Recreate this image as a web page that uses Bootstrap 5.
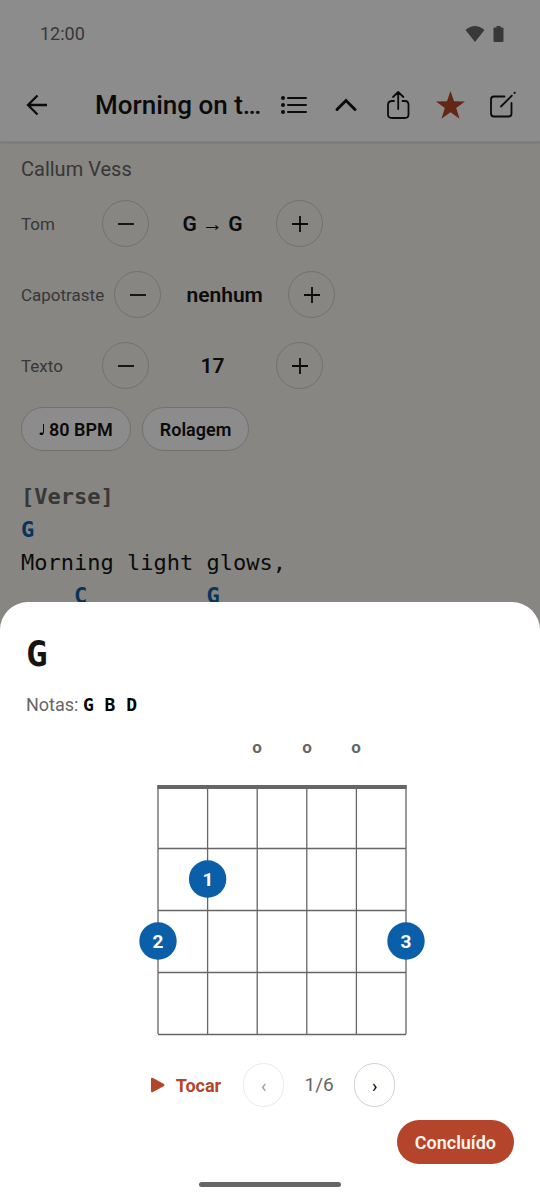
<!DOCTYPE html>
<html lang="pt">
<head>
<meta charset="utf-8">
<meta name="viewport" content="width=device-width, initial-scale=1">
<title>Morning on t…</title>
<link rel="stylesheet" href="https://cdn.jsdelivr.net/npm/bootstrap@5.3.0/dist/css/bootstrap.min.css">
<style>
  :root { --ink: #141414; --muted: #666; --accent: #b5452a; --chord: #0b5fa8; --edge: #dad8d2; }
  body { font-family: Roboto, "Liberation Sans", sans-serif; font-size: 18px; line-height: 24px; color: var(--ink); background: #f6f4ed; overflow: hidden; }
  .mono { font-family: "DejaVu Sans Mono", "Liberation Mono", monospace; }
  .soft { color: var(--muted); }
  .status { height: 68px; padding: 0 36px 0 40px; }
  .topbar { height: 73px; padding: 0 16px 0 15px; }
  .head { border-bottom: 1px solid #e7e7e5; box-shadow: 0 1px 2px #0002; }
  .tool { width: 44px; height: 44px; color: var(--ink); }
  .song-title { font-size: 26px; line-height: 32px; font-weight: 500; margin-left: 36px; }
  .song { padding: 15px 21px; }
  .artist { font-size: 20px; }
  .steppers { margin-top: 19px; gap: 24px; }
  .stepper { gap: 10px; }
  .stepper-label { min-width: 71px; font-size: 17px; }
  .stepper-value { width: 107px; font-size: 21px; font-weight: 600; text-align: center; }
  .round { width: 47px; height: 47px; border: 1px solid #cfcdc6; color: var(--ink); }
  .pills { margin-top: 18px; gap: 11px; }
  .pill { height: 44px; padding: 0 17px; font-size: 18px; font-weight: 600; border: 1px solid #cfcdc6; background: #fff; color: var(--ink); }
  .lyrics { margin: 29px 0 0; font-size: 22px; line-height: 33px; overflow: visible; }
  .chord { color: var(--chord); font-weight: 700; }
  .offcanvas-backdrop.show { opacity: .45; }
  .sheet.offcanvas { height: auto; max-height: none; border: 0; border-radius: 28px 28px 0 0; color: var(--ink); background: #fff; }
  .sheet-body { padding: 28px 26px 13px; }
  .sheet-title { font-size: 36px; line-height: 48px; font-weight: 700; }
  .notes { margin-top: 15px; }
  .fretboard { margin-top: 16px; }
  .pager { margin-top: 20px; }
  .play { color: var(--accent); font-size: 18px; font-weight: 700; gap: 11px; padding: 0 22px 0 5px; }
  .step { width: 41px; height: 44px; border: 1px solid #d2d0cc; border-radius: 22px; font-size: 18px; color: #000; }
  .step:disabled { opacity: .45; border-color: #d2d0cc; }
  .count { width: 70px; font-size: 19px; text-align: center; }
  .done { height: 44px; margin-top: 13px; padding: 0 18px; font-size: 18px; font-weight: 600; color: #fff5ec; background: var(--accent); }
  .home { width: 142px; height: 5px; margin-top: 18px; background: var(--muted); }
</style>
</head>
<body>
<header class="bg-white head">
  <div class="status d-flex align-items-center justify-content-between soft">
    <span>12:00</span>
    <span class="d-flex align-items-center gap-2">
      <svg width="20" height="18" viewBox="0 0 20 18" fill="#666"><path d="M.5 5Q10-3 19.500 5L10 17Z"/></svg>
      <svg width="11" height="18" viewBox="0 0 11 18" fill="#666"><path d="M3.500 1h4v1.500h2q1 0 1 1V16q0 1-1 1h-8q-1 0-1-1V3.500q0-1 1-1h2z"/></svg>
    </span>
  </div>
  <nav class="topbar d-flex align-items-center" aria-label="Música">
    <button class="tool btn p-0 border-0" aria-label="Voltar"><svg width="24" height="24" fill="none" stroke="currentColor" stroke-width="2.300"><path d="M22 12H3M12.500 2.500 3 12l9.500 9.500"/></svg></button>
    <h1 class="song-title mb-0 flex-fill text-nowrap">Morning on t…</h1>
    <div class="d-flex gap-2">
      <button class="tool btn p-0 border-0" aria-label="Lista"><svg width="28" height="24" viewBox="0 0 28 24" fill="none" stroke="currentColor" stroke-width="2" stroke-linecap="round"><path d="M8 5h18M8 12h18M8 19h18"/><g fill="currentColor" stroke="none"><circle cx="3" cy="5" r="2"/><circle cx="3" cy="12" r="2"/><circle cx="3" cy="19" r="2"/></g></svg></button>
      <button class="tool btn p-0 border-0" aria-label="Recolher"><svg width="24" height="24" fill="none" stroke="currentColor" stroke-width="3" stroke-linecap="round"><path d="m3 16.500 9-9 9 9"/></svg></button>
      <button class="tool btn p-0 border-0" aria-label="Compartilhar"><svg width="28" height="30" fill="none" stroke="currentColor" stroke-width="1.800" stroke-linecap="round" stroke-linejoin="round"><path d="M10 11H8q-4 0-4 4v9.500Q4 28 8 28h13q3.500 0 3.500-3.500V15q0-4-3.500-4h-2.500M14.200 19V2M9 7l5.200-5 5.200 5"/></svg></button>
      <button class="tool btn p-0 border-0" aria-label="Favorito"><svg width="30" height="30" fill="#b5452a"><path d="m15.500 1 3.500 10.200 11 .2-8.800 6.700 3.300 10.700-9-6.500-9 6.500 3.300-10.700L1 11.400l11-.2z"/></svg></button>
      <button class="tool btn p-0 border-0" aria-label="Editar"><svg width="28" height="30" fill="none" stroke="currentColor" stroke-width="1.800" stroke-linecap="round"><path d="M16.500 6.500H6q-3 0-3 3v14q0 3 3 3h14.500q3 0 3-3V13M13 16.500 23.800 5.700M26.500 3l.3-.3"/></svg></button>
    </div>
  </nav>
</header>
<main class="song">
  <p class="artist soft mb-0">Callum Vess</p>
  <div class="steppers d-flex flex-column">
    <div class="stepper d-flex align-items-center"><span class="stepper-label soft">Tom</span>
      <button class="round btn rounded-circle p-0" aria-label="Tom abaixo"><svg width="18" height="18" stroke="currentColor" stroke-width="1.800"><path d="M1 9h16"/></svg></button>
      <output class="stepper-value">G → G</output>
      <button class="round btn rounded-circle p-0" aria-label="Tom acima"><svg width="18" height="18" stroke="currentColor" stroke-width="1.800"><path d="M1 9h16M9 1v16"/></svg></button></div>
    <div class="stepper d-flex align-items-center"><span class="stepper-label soft">Capotraste</span>
      <button class="round btn rounded-circle p-0" aria-label="Capotraste abaixo"><svg width="18" height="18" stroke="currentColor" stroke-width="1.800"><path d="M1 9h16"/></svg></button>
      <output class="stepper-value">nenhum</output>
      <button class="round btn rounded-circle p-0" aria-label="Capotraste acima"><svg width="18" height="18" stroke="currentColor" stroke-width="1.800"><path d="M1 9h16M9 1v16"/></svg></button></div>
    <div class="stepper d-flex align-items-center"><span class="stepper-label soft">Texto</span>
      <button class="round btn rounded-circle p-0" aria-label="Texto menor"><svg width="18" height="18" stroke="currentColor" stroke-width="1.800"><path d="M1 9h16"/></svg></button>
      <output class="stepper-value">17</output>
      <button class="round btn rounded-circle p-0" aria-label="Texto maior"><svg width="18" height="18" stroke="currentColor" stroke-width="1.800"><path d="M1 9h16M9 1v16"/></svg></button></div>
  </div>
  <div class="pills d-flex">
    <button class="pill btn rounded-pill d-flex align-items-center gap-1"><svg width="6" height="14" viewBox="0 0 6 14"><ellipse cx="2.500" cy="11.700" rx="2" ry="1.300"/><path d="M4.500 2v9" stroke="#141414"/></svg>80 BPM</button>
    <button class="pill btn rounded-pill">Rolagem</button>
  </div>
  <pre class="lyrics mono"><b class="soft">[Verse]</b>
<span class="chord">G</span>
Morning light glows,
<span class="chord">    C         G</span></pre>
</main>
<div class="offcanvas-backdrop show"></div>
<section class="sheet offcanvas offcanvas-bottom show" data-bs-backdrop="false" data-bs-scroll="true" role="dialog" aria-labelledby="chord-name">
  <div class="sheet-body d-flex flex-column">
    <h2 class="sheet-title mono mb-0" id="chord-name">G</h2>
    <p class="notes soft mb-0">Notas: <b class="mono text-black">G B D</b></p>
    <svg class="fretboard align-self-center" width="340" height="310" viewBox="0 0 340 310" role="img" aria-label="Diagrama do acorde G" font-family="Roboto, sans-serif" font-weight="700" text-anchor="middle">
      <g fill="#666" font-size="17"><text x="157" y="20">o</text><text x="207" y="20">o</text><text x="256" y="20">o</text></g>
      <path d="M57.500 54h249" stroke="#666" stroke-width="4"/>
      <path d="M58 52v249M107.600 52v249M157.200 52v249M206.800 52v249M256.400 52v249M306 52v249M58 115.500h248M58 177.500h248M58 239.500h248M58 301.500h248" stroke="#666" stroke-width="1.300"/>
      <g fill="#0b5fa8"><circle cx="107.600" cy="146" r="18.700"/><circle cx="58" cy="208" r="18.700"/><circle cx="306" cy="208" r="18.700"/></g>
      <g fill="#fff" font-size="19"><text x="108" y="153">1</text><text x="58" y="215">2</text><text x="306" y="215">3</text></g>
    </svg>
    <div class="pager d-flex align-items-center justify-content-center">
      <button class="play btn border-0 d-flex align-items-center"><svg width="15" height="16" fill="currentColor"><path d="M1 2q0-2 2-1l11 6q1 1 0 2L3 15q-2 1-2-1z"/></svg>Tocar</button>
      <button class="step btn p-0" aria-label="Anterior" disabled>‹</button>
      <span class="count soft">1/6</span>
      <button class="step btn p-0" aria-label="Próximo">›</button>
    </div>
    <button class="done btn border-0 rounded-pill align-self-end">Concluído</button>
    <div class="home rounded-pill align-self-center"></div>
  </div>
</section>
<script src="https://cdn.jsdelivr.net/npm/bootstrap@5.3.0/dist/js/bootstrap.bundle.min.js"></script>
</body>
</html>
